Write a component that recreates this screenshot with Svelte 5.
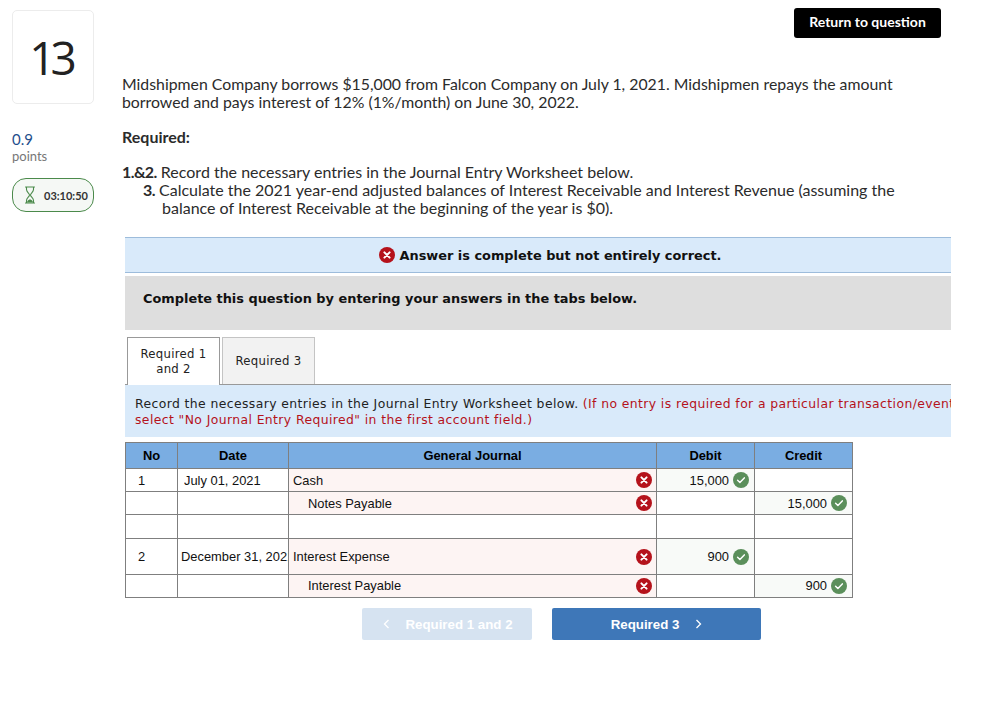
<script>
  const rows = [
    { no: '1', date: 'July 01, 2021', account: 'Cash', debit: '15,000', credit: '', h: 'r23' },
    { no: '', date: '', account: 'Notes Payable', indent: true, debit: '', credit: '15,000', h: 'r23' },
    { no: '', date: '', account: '', debit: '', credit: '', h: 'r24', blank: true },
    { no: '2', date: 'December 31, 2021', account: 'Interest Expense', debit: '900', credit: '', h: 'r36', tight: true },
    { no: '', date: '', account: 'Interest Payable', indent: true, debit: '', credit: '900', h: 'r23 last' }
  ];
</script>

{#snippet cross(size)}
  <svg class="icon" width={size} height={size} viewBox="0 0 16 16" aria-hidden="true">
    <circle cx="8" cy="8" r="8" fill="#b5121b" />
    <path d="M5.4 5.4l5.2 5.2M10.6 5.4l-5.2 5.2" stroke="#fff" stroke-width="2" stroke-linecap="round" />
  </svg>
{/snippet}

{#snippet check()}
  <svg class="icon" width="16" height="16" viewBox="0 0 16 16" aria-hidden="true">
    <circle cx="8" cy="8" r="8" fill="#5b8f5b" />
    <path d="M4.6 8.3l2.3 2.2 4.4-4.6" fill="none" stroke="#fff" stroke-width="1.5" stroke-linecap="round" stroke-linejoin="round" />
  </svg>
{/snippet}

<div class="page">
  <aside class="side">
    <div class="number">13</div>
    <div class="score">0.9</div>
    <div class="points">points</div>
    <div class="timer">
      <svg width="12" height="18" viewBox="0 0 12 18" aria-hidden="true">
        <path d="M1.5 1h9M1.5 17h9M2.5 1v2.5c0 2.5 3 3.8 3 5.5s-3 3-3 5.5V17M9.5 1v2.5c0 2.5-3 3.8-3 5.5s3 3 3 5.5V17" fill="none" stroke="#4b8a4b" stroke-width="1.1" stroke-linecap="round" />
        <path d="M3 16.4c0-2 2-2.6 3-3.2 1 .6 3 1.2 3 3.2z" fill="#4b8a4b" />
      </svg>
      <span>03:10:50</span>
    </div>
  </aside>

  <main class="main">
    <div class="topbar"><button class="return">Return to question</button></div>

    <p class="intro">Midshipmen Company borrows $15,000 from Falcon Company on July 1, 2021. Midshipmen repays the amount borrowed and pays interest of 12% (1%/month) on June 30, 2022.</p>
    <p class="required">Required:</p>
    <div class="list">
      <div><b>1.&amp;2.</b> Record the necessary entries in the Journal Entry Worksheet below.</div>
      <div class="n3"><b>3.</b> Calculate the 2021 year-end adjusted balances of Interest Receivable and Interest Revenue (assuming the</div>
      <div class="n3b">balance of Interest Receivable at the beginning of the year is $0).</div>
    </div>

    <section class="work">
      <div class="banner">{@render cross(16)}<span>Answer is complete but not entirely correct.</span></div>
      <div class="panel">Complete this question by entering your answers in the tabs below.</div>

      <div class="tabs">
        <div class="tab active">Required 1<br />and 2</div>
        <div class="tab">Required 3</div>
      </div>

      <div class="instr">
        <div>Record the necessary entries in the Journal Entry Worksheet below. <span class="red">(If no entry is required for a particular transaction/event,</span></div>
        <div class="red">select "No Journal Entry Required" in the first account field.)</div>
      </div>

      <table>
        <colgroup>
          <col class="c1" /><col class="c2" /><col class="c3" /><col class="c4" /><col class="c5" />
        </colgroup>
        <thead>
          <tr><th>No</th><th>Date</th><th>General Journal</th><th>Debit</th><th>Credit</th></tr>
        </thead>
        <tbody>
          {#each rows as r}
            <tr class={r.h}>
              <td class="no">{r.no}</td>
              <td class="date" class:tight={r.tight}><div class="clip">{r.date}</div></td>
              <td class="acct" class:pink={!r.blank} class:indent={r.indent}>
                <div class="cellrow"><span>{r.account}</span>{#if !r.blank}{@render cross(16)}{/if}</div>
              </td>
              <td class="amt" class:good={r.debit}>
                {#if r.debit}<div class="cellrow end"><span>{r.debit}</span>{@render check()}</div>{/if}
              </td>
              <td class="amt" class:good={r.credit}>
                {#if r.credit}<div class="cellrow end"><span>{r.credit}</span>{@render check()}</div>{/if}
              </td>
            </tr>
          {/each}
        </tbody>
      </table>

      <div class="nav">
        <button class="btn prev">
          <svg width="7" height="10" viewBox="0 0 7 10" aria-hidden="true"><path d="M5.5 1L1.5 5l4 4" fill="none" stroke="#fff" stroke-width="1.3" /></svg>
          <span>Required 1 and 2</span>
        </button>
        <button class="btn next">
          <span>Required 3</span>
          <svg width="7" height="10" viewBox="0 0 7 10" aria-hidden="true"><path d="M1.5 1l4 4-4 4" fill="none" stroke="#fff" stroke-width="1.3" /></svg>
        </button>
      </div>
    </section>
  </main>
</div>

<style>
  :global(body) {
    margin: 0;
    background: #fff;
  }
  .page {
    display: flex;
    width: 983px;
    height: 714px;
    overflow: hidden;
    box-sizing: border-box;
    padding: 10px 0 0 12px;
    font-family: Lato, "Open Sans", "Liberation Sans", sans-serif;
    color: #2b2b2b;
  }
  .side {
    width: 82px;
    flex: none;
    margin-right: 28px;
  }
  .number {
    box-sizing: border-box;
    height: 94px;
    border: 1px solid #ececec;
    border-radius: 5px;
    display: flex;
    align-items: center;
    justify-content: center;
    font: 46px "Open Sans", sans-serif;
    color: #222;
    letter-spacing: -5px;
    padding-right: 5px;
  }
  .score {
    margin-top: 26px;
    font-size: 15px;
    line-height: 18px;
    color: #1f4e8c;
  }
  .points {
    font-size: 13px;
    line-height: 16px;
    color: #777;
  }
  .timer {
    box-sizing: border-box;
    margin-top: 14px;
    height: 34px;
    border: 1px solid #4b8a4b;
    border-radius: 14px;
    background: #f5f8f5;
    display: flex;
    align-items: center;
    gap: 8px;
    padding-left: 11px;
    font-size: 11px;
    font-weight: 700;
    color: #333;
  }
  .main {
    width: 829px;
    flex: none;
    overflow: hidden;
    margin-top: -2px;
  }
  .topbar {
    display: flex;
    justify-content: flex-end;
    height: 30px;
    padding-right: 10px;
  }
  .return {
    width: 147px;
    height: 30px;
    background: #000;
    color: #fff;
    border: 0;
    border-radius: 3px;
    font: 700 14px Lato, "Open Sans", sans-serif;
    padding: 0 0 3px;
  }
  .intro {
    margin: 37px 0 0;
    width: 790px;
    font-size: 15.82px;
    line-height: 18px;
  }
  .required {
    margin: 17px 0 0;
    font-size: 16px;
    line-height: 18px;
    font-weight: 700;
  }
  .list {
    margin-top: 17px;
    font-size: 16px;
    line-height: 18px;
  }
  .list b {
    letter-spacing: -0.6px;
  }
  .n3 {
    padding-left: 21px;
  }
  .n3b {
    padding-left: 40px;
  }
  .work {
    margin: 20px 0 0 3px;
  }
  .banner {
    box-sizing: border-box;
    height: 36px;
    background: #d9eafa;
    border-top: 1px solid #9dbcdb;
    border-bottom: 1px solid #9dbcdb;
    display: flex;
    align-items: center;
    justify-content: center;
    gap: 5px;
    padding-left: 24px;
    font: 700 12.9px "DejaVu Sans", Verdana, sans-serif;
    color: #111;
  }
  .panel {
    box-sizing: border-box;
    margin-top: 3px;
    height: 54px;
    background: #dedede;
    padding: 14px 18px 0;
    font: 700 12.9px/18px "DejaVu Sans", Verdana, sans-serif;
    color: #111;
  }
  .tabs {
    display: flex;
    gap: 2px;
    margin-top: 7px;
    padding-left: 2px;
    height: 47px;
    border-bottom: 1px solid #999;
  }
  .tab {
    box-sizing: border-box;
    width: 93px;
    height: 47px;
    padding-top: 1px;
    border: 1px solid #c4c4c4;
    border-bottom: 0;
    background: #f2f2f2;
    display: flex;
    align-items: center;
    justify-content: center;
    text-align: center;
    font: 11.7px/15px "DejaVu Sans", Verdana, sans-serif;
    letter-spacing: 0.3px;
    color: #222;
  }
  .tab.active {
    background: #fff;
    border-color: #999;
    height: 48px;
    position: relative;
    z-index: 1;
  }
  .instr {
    box-sizing: border-box;
    height: 52px;
    padding: 11px 10px 0;
    background: #d9eafa;
    font: 12.4px/16px "DejaVu Sans", Verdana, sans-serif;
    letter-spacing: 0.4px;
    color: #222;
    white-space: nowrap;
    overflow: hidden;
  }
  .red {
    color: #b5121b;
  }
  table {
    margin-top: 5px;
    width: 727px;
    table-layout: fixed;
    border-collapse: collapse;
    font: 12.9px "Liberation Sans", Arial, sans-serif;
    color: #111;
  }
  .c1 { width: 52px; }
  .c2 { width: 111px; }
  .c3 { width: 368px; }
  .c4 { width: 98px; }
  .c5 { width: 98px; }
  th, td {
    border: 1px solid #7f7f7f;
    padding: 0;
  }
  th {
    height: 25px;
    background: #7aade2;
    font-weight: 700;
    color: #000;
  }
  .r23 td { height: 22px; }
  .r24 td { height: 23px; }
  .r36 td { height: 35px; }
  .last .cellrow { margin-top: -1px; }
  .no { padding-left: 12px; }
  .date { padding-left: 6px; }
  .date.tight { padding-left: 3px; }
  .clip {
    overflow: hidden;
    white-space: nowrap;
    width: 107px;
  }
  .date:not(.tight) .clip { width: 100px; }
  .acct { padding: 0 4px; }
  .acct.indent { padding-left: 19px; }
  .pink { background: #fdf4f3; }
  .good { background: #f8faf8; }
  .cellrow {
    display: flex;
    align-items: center;
    justify-content: space-between;
  }
  .cellrow.end {
    justify-content: flex-end;
    gap: 4px;
    padding-right: 5px;
  }
  .icon {
    display: block;
    flex: none;
  }
  .nav {
    display: flex;
    gap: 20px;
    margin: 10px 0 0 237px;
  }
  .btn {
    height: 32px;
    border: 0;
    border-radius: 2px;
    color: #fff;
    font: 700 13.3px "Liberation Sans", Arial, sans-serif;
    display: flex;
    align-items: center;
    justify-content: center;
    padding: 0;
  }
  .prev {
    width: 170px;
    background: #d6e3f1;
    gap: 15px;
    padding-left: 2px;
  }
  .next {
    width: 209px;
    background: #3e77b8;
    gap: 16px;
  }
</style>
